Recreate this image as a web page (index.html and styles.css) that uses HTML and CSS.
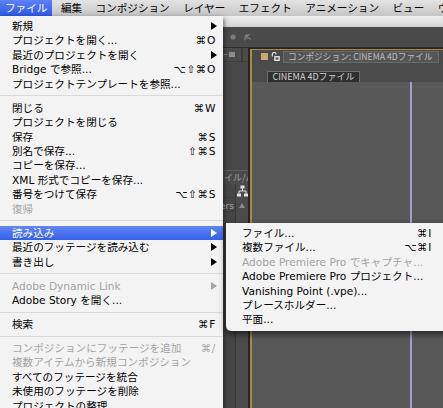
FILE: index.html
```
<!DOCTYPE html>
<html lang="ja">
<head>
<meta charset="utf-8">
<title>After Effects ファイルメニュー</title>
<link rel="stylesheet" href="styles.css">
</head>
<body>
<div class="screen">
  <div class="menubar">
    <span class="mb-item active">ファイル</span>
    <span class="mb-item">編集</span>
    <span class="mb-item">コンポジション</span>
    <span class="mb-item">レイヤー</span>
    <span class="mb-item">エフェクト</span>
    <span class="mb-item">アニメーション</span>
    <span class="mb-item">ビュー</span>
    <span class="mb-item">ウィンドウ</span>
  </div>
  <div class="titlestrip"></div>
  <div class="toolbar">
    <svg class="tb-icon" width="6" height="6" viewBox="0 0 6 6"><circle cx="3" cy="3" r="2.6" fill="#7c7c7c"/></svg>
    <svg class="tb-icon" width="7" height="8" viewBox="0 0 7 8"><path d="M1 7.5V3.5M1 3.5L3 1.5M3 1.5V6M3 4L5.5 1M4.5 4.5L6.5 6.5" stroke="#858585" stroke-width="1.1" fill="none"/></svg>
  </div>
  <div class="panels">
    <div class="leftpanel">
      <div class="lp-tabs">
        <span class="lp-dash"></span>
        <span class="lp-square"></span>
        <span class="lp-bar"></span>
      </div>
      <div class="lp-body"></div>
      <div class="lp-tab2"><span>ファイル/パス</span></div>
      <div class="lp-bottom">
        <div class="lp-col1">
          <div class="lp-cell"></div>
          <div class="lp-cell lp-text">Layers</div>
        </div>
        <div class="lp-col2">
          <div class="lp-cell">
            <svg width="11" height="12" viewBox="0 0 11 12"><rect x="3.5" y="0.5" width="4" height="3" fill="#e4e4e4"/><path d="M5.5 3.5V6M2 8.5V6H9V8.5" stroke="#e4e4e4" fill="none"/><rect x="0" y="8.5" width="4" height="3" fill="#e4e4e4"/><rect x="7" y="8.5" width="4" height="3" fill="#e4e4e4"/></svg>
          </div>
          <div class="lp-cell"><span class="lp-up"></span></div>
        </div>
      </div>
    </div>
    <div class="comp">
      <div class="comp-tabs">
        <span class="comp-color"></span>
        <svg class="comp-lock" width="9" height="9" viewBox="0 0 9 9"><path d="M1.3 4.5V2.4a1.9 1.9 0 0 1 3.8 0" fill="none" stroke="#dcdcdc" stroke-width="1.2"/><rect x="3.2" y="4" width="5.6" height="5" fill="#e2e2e2"/><rect x="4.6" y="5.4" width="2.8" height="2.2" fill="#555"/></svg>
        <span class="comp-tab">コンポジション: CINEMA 4Dファイル</span>
      </div>
      <div class="comp-tools"><span class="comp-btn">CINEMA 4Dファイル</span></div>
      <div class="viewer"><div class="guide"></div></div>
    </div>
  </div>

  <div class="menu main">
    <div class="item"><span class="label">新規</span><span class="arrow"></span></div>
    <div class="item"><span class="label">プロジェクトを開く...</span><span class="key">⌘O</span></div>
    <div class="item"><span class="label">最近のプロジェクトを開く</span><span class="arrow"></span></div>
    <div class="item"><span class="label">Bridge で参照...</span><span class="key">⌥⇧⌘O</span></div>
    <div class="item"><span class="label">プロジェクトテンプレートを参照...</span></div>
    <div class="sep"></div>
    <div class="item"><span class="label">閉じる</span><span class="key">⌘W</span></div>
    <div class="item"><span class="label">プロジェクトを閉じる</span></div>
    <div class="item"><span class="label">保存</span><span class="key">⌘S</span></div>
    <div class="item"><span class="label">別名で保存...</span><span class="key">⇧⌘S</span></div>
    <div class="item"><span class="label">コピーを保存...</span></div>
    <div class="item"><span class="label">XML 形式でコピーを保存...</span></div>
    <div class="item"><span class="label">番号をつけて保存</span><span class="key">⌥⇧⌘S</span></div>
    <div class="item dis"><span class="label">復帰</span></div>
    <div class="sep"></div>
    <div class="item sel"><span class="label">読み込み</span><span class="arrow"></span></div>
    <div class="item"><span class="label">最近のフッテージを読み込む</span><span class="arrow"></span></div>
    <div class="item"><span class="label">書き出し</span><span class="arrow"></span></div>
    <div class="sep"></div>
    <div class="item dis"><span class="label">Adobe Dynamic Link</span><span class="arrow"></span></div>
    <div class="item"><span class="label">Adobe Story を開く...</span></div>
    <div class="sep"></div>
    <div class="item"><span class="label">検索</span><span class="key">⌘F</span></div>
    <div class="sep"></div>
    <div class="item dis"><span class="label">コンポジションにフッテージを追加</span><span class="key">⌘/</span></div>
    <div class="item dis"><span class="label">複数アイテムから新規コンポジション</span></div>
    <div class="item"><span class="label">すべてのフッテージを統合</span></div>
    <div class="item"><span class="label">未使用のフッテージを削除</span></div>
    <div class="item"><span class="label">プロジェクトの整理</span></div>
  </div>

  <div class="menu sub">
    <div class="item"><span class="label">ファイル...</span><span class="key">⌘I</span></div>
    <div class="item"><span class="label">複数ファイル...</span><span class="key">⌥⌘I</span></div>
    <div class="item dis"><span class="label">Adobe Premiere Pro でキャプチャ...</span></div>
    <div class="item"><span class="label">Adobe Premiere Pro プロジェクト...</span></div>
    <div class="item"><span class="label">Vanishing Point (.vpe)...</span></div>
    <div class="item"><span class="label">プレースホルダー...</span></div>
    <div class="item"><span class="label">平面...</span></div>
  </div>
</div>
</body>
</html>
```
FILE: styles.css
```
* { box-sizing: border-box; margin: 0; padding: 0; }
html, body { width: 443px; height: 408px; overflow: hidden; background: #484848; }
body { font-family: "DejaVu Sans", "Noto Sans CJK JP", sans-serif; }

.screen {
  position: relative;
  width: 443px;
  height: 408px;
  display: flex;
  flex-direction: column;
  overflow: hidden;
}

/* menubar */
.menubar {
  height: 16px;
  flex: none;
  display: flex;
  gap: 3.5px;
  background: linear-gradient(#e3e3e3, #c5c5c5);
  font-family: "Noto Sans CJK JP", sans-serif;
  font-size: 10.6px;
  line-height: 16px;
  color: #000;
  white-space: nowrap;
}
.mb-item { padding: 0 5px; flex: none; }
.mb-item.active { background: linear-gradient(#5e81f3, #2c59e6); color: #fff; }

.titlestrip {
  height: 11px;
  flex: none;
  background: linear-gradient(#eeeeee, #d4d4d4);
}

.toolbar {
  height: 21px;
  flex: none;
  background: #4a4a4a;
  border-bottom: 1px solid #2e2e2e;
  display: flex;
  align-items: center;
  padding-left: 230px;
  gap: 8px;
}

/* panels */
.panels {
  flex: 1;
  display: flex;
  gap: 2px;
  background: #262626;
  min-height: 0;
}
.leftpanel {
  width: 248px;
  flex: none;
  display: flex;
  flex-direction: column;
  background: #484848;
}
.lp-tabs {
  height: 14px;
  flex: none;
  display: flex;
  align-items: center;
  justify-content: flex-end;
  padding-right: 5px;
  gap: 2px;
  background: #4b4b4b;
  border-bottom: 1px solid #3c3c3c;
}
.lp-dash { width: 3px; height: 1px; background: #8a8a8a; }
.lp-square { width: 6px; height: 5px; background: #8c8c8c; margin-right: 4px; }
.lp-bar { width: 2px; height: 14px; background: #3a3a3a; }
.lp-body { height: 108px; flex: none; }
.lp-tab2 {
  height: 14px;
  flex: none;
  border-top: 1px solid #5c5c5c;
  background: #4a4a4a;
  padding-left: 206px;
  font-family: "Noto Sans CJK JP", sans-serif;
  font-size: 9px;
  line-height: 13px;
  color: #a2a2a2;
  white-space: nowrap;
  overflow: hidden;
}
.lp-bottom { flex: 1; display: flex; }
.lp-col1 { flex: 1; background: #464646; border-right: 1px solid #373737; }
.lp-col2 { width: 12px; background: #4b4b4b; }
.lp-cell { height: 14px; display: flex; align-items: center; justify-content: center; }
.lp-col1 .lp-cell { justify-content: flex-end; border-bottom: 1px solid #3e3e3e; }
.lp-text {
  font-family: "DejaVu Sans", sans-serif;
  font-size: 9px;
  color: #a6a6a6;
  padding-right: 1px;
  padding-top: 3px;
}
.lp-up {
  width: 0; height: 0;
  border-left: 3px solid transparent;
  border-right: 3px solid transparent;
  border-bottom: 5px solid #8a8a8a;
}

.comp {
  flex: 1;
  display: flex;
  flex-direction: column;
  margin-top: 1px;
  border-top: 1px solid #a88a45;
  border-left: 2px solid #a88a45;
  background: #4a4a4a;
  min-width: 0;
}
.comp-tabs {
  height: 13px;
  flex: none;
  display: flex;
  align-items: center;
  padding-left: 9px;
  gap: 3px;
}
.comp-color { width: 7px; height: 7px; background: #c9a96c; flex: none; }
.comp-lock { flex: none; }
.comp-tab {
  width: 156px;
  height: 12px;
  flex: none;
  border: 1px solid #696969;
  background: #555555;
  padding-left: 4px;
  font-family: "Noto Sans CJK JP", sans-serif;
  font-size: 8.7px;
  line-height: 10px;
  color: #bdbdbd;
  white-space: nowrap;
  overflow: hidden;
}
.comp-tools {
  height: 19px;
  flex: none;
  padding: 5px 0 0 15px;
  background: #4b4b4b;
}
.comp-btn {
  display: inline-block;
  width: 93px;
  height: 12px;
  background: #2f2f2f;
  border: 1px solid #6c6c6c;
  font-family: "Noto Sans CJK JP", sans-serif;
  font-size: 9px;
  line-height: 10px;
  color: #d2d2d2;
  text-align: center;
  white-space: nowrap;
  overflow: hidden;
}
.viewer {
  flex: 1;
  display: flex;
  background: #585858;
  padding-left: 158px;
}
.guide { width: 2px; background: #a2a2c6; }

/* menus */
.menu {
  position: absolute;
  background: #f3f3f3;
  font-size: 10.6px;
  color: #000;
  white-space: nowrap;
}
.main {
  left: 0;
  top: 16px;
  width: 223px;
  height: 400px;
  padding-top: 3px;
  box-shadow: 1px 2px 5px rgba(0, 0, 0, 0.55);
}
.sub {
  left: 226px;
  top: 222.85px;
  width: 224px;
  padding: 3px 0 4px;
  border-radius: 0 0 5px 5px;
  box-shadow: 0 3px 7px rgba(0, 0, 0, 0.6);
}
.item {
  display: flex;
  align-items: center;
  height: 14.45px;
  line-height: 14.45px;
  padding: 0 7px 0 12px;
}
.sub .item { padding: 0 18px 0 16px; }
.label { flex: 1; }
.key { letter-spacing: 0.6px; }
.dis { color: #a3a3a3; }
.sel { background: linear-gradient(#6485f4, #3360e9); color: #fff; }
.arrow {
  width: 0;
  height: 0;
  border-left: 6px solid currentColor;
  border-top: 4px solid transparent;
  border-bottom: 4px solid transparent;
  margin-right: -1px;
}
.sep { height: 9.5px; display: flex; align-items: center; }
.sep::before { content: ""; flex: 1; height: 1px; background: #dadada; }
```
